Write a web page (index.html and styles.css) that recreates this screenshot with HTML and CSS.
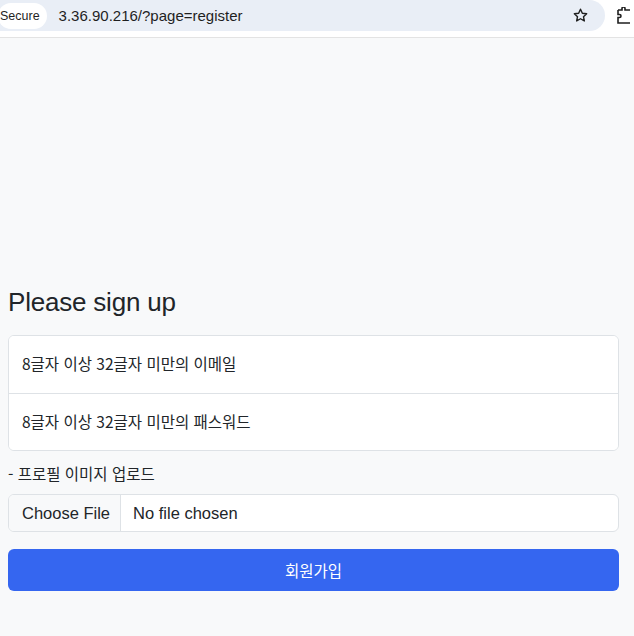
FILE: index.html
```html
<!DOCTYPE html>
<html lang="ko">
<head>
<meta charset="utf-8">
<title>Register</title>
<link rel="stylesheet" href="styles.css">
</head>
<body>
<header class="toolbar">
  <div class="omnibox">
    <span class="secure">Secure</span>
    <span class="url">3.36.90.216/?page=register</span>
    <svg class="star" width="17" height="17" viewBox="0 0 24 24" fill="none" stroke="#1f1f1f" stroke-width="2" stroke-linejoin="round"><path d="M12 3.2l2.6 5.6 6.1.7-4.5 4.2 1.2 6-5.4-3.1-5.4 3.1 1.2-6-4.5-4.2 6.1-.7z"/></svg>
  </div>
  <svg class="ext" width="14" height="18" viewBox="0 0 14 18" fill="none" stroke="#1f1f1f" stroke-width="1.6"><path d="M2 3h4V1.5a1.5 1.5 0 0 1 3 0V3h5M2 3v4.5h1.5a1.5 1.5 0 0 1 0 3H2V16h12"/></svg>
</header>
<main class="page">
  <form class="signup">
    <h1 class="title">Please sign up</h1>
    <div class="field-group">
      <input class="field" type="text" placeholder="8글자 이상 32글자 미만의 이메일">
      <input class="field" type="password" placeholder="8글자 이상 32글자 미만의 패스워드">
    </div>
    <p class="label">- 프로필 이미지 업로드</p>
    <label class="file">
      <span class="file-btn">Choose File</span>
      <span class="file-name">No file chosen</span>
    </label>
    <button class="submit" type="button">회원가입</button>
  </form>
</main>
</body>
</html>
```

FILE: styles.css
```css
* { box-sizing: border-box; }
html, body { margin: 0; padding: 0; }
body {
  width: 634px;
  height: 636px;
  overflow: hidden;
  background: #f8f9fa;
  font-family: "Liberation Sans", Arial, "Noto Sans CJK KR", sans-serif;
  color: #212529;
}
.toolbar {
  height: 38px;
  background: #ffffff;
  border-bottom: 1px solid #e3e3e3;
  display: flex;
  align-items: flex-start;
}
.omnibox {
  flex: none;
  width: 625px;
  height: 31px;
  margin-left: -20px;
  background: #e9eef6;
  border-radius: 0 16px 16px 0;
  display: flex;
  align-items: center;
  padding-left: 18px;
  padding-right: 16px;
}
.secure {
  background: #ffffff;
  border-radius: 13px;
  height: 26px;
  line-height: 26px;
  padding: 0 7px 0 2px;
  font-size: 12.5px;
  color: #1f1f1f;
}
.url {
  margin-left: 12px;
  font-size: 15px;
  color: #1f1f1f;
  flex: 1;
}
.ext { flex: none; margin-left: 11px; margin-top: 7px; }

.page {
  height: 598px;
  display: flex;
  flex-direction: column;
  justify-content: flex-end;
  padding: 0 15px 45px 8px;
}
.signup { display: flex; flex-direction: column; }
.title {
  margin: 0 0 18px;
  font-size: 26px;
  line-height: 30px;
  font-weight: 400;
  letter-spacing: -0.2px;
  color: #212529;
}
.field-group {
  display: flex;
  flex-direction: column;
  background: #fff;
  border: 1px solid #dee2e6;
  border-radius: 6px;
  overflow: hidden;
}
.field {
  height: 57px;
  border: 0;
  padding: 0 13px 3px;
  font-size: 15.5px;
  font-family: "Noto Sans CJK KR", "Liberation Sans", sans-serif;
  color: #212529;
  background: #fff;
  outline: none;
}
.field + .field { border-top: 1px solid #dee2e6; }
.field::placeholder { color: #212529; opacity: 1; }
.label {
  margin: 10px 0 9px;
  font-size: 15.5px;
  line-height: 24px;
  font-family: "Noto Sans CJK KR", "Liberation Sans", sans-serif;
}
.file {
  display: flex;
  height: 38px;
  border: 1px solid #dee2e6;
  border-radius: 6px;
  background: #fff;
  overflow: hidden;
  font-size: 16.5px;
  line-height: 36px;
  white-space: nowrap;
}
.file-btn {
  flex: none;
  padding: 0 10px 0 13px;
  background: #f8f9fa;
  border-right: 1px solid #dee2e6;
}
.file-name { padding: 0 12px; }
.submit {
  margin-top: 17px;
  height: 42px;
  border: 0;
  border-radius: 6px;
  background: #3566f0;
  color: #fff;
  font-size: 15.5px;
  font-family: "Noto Sans CJK KR", "Liberation Sans", sans-serif;
}
```
